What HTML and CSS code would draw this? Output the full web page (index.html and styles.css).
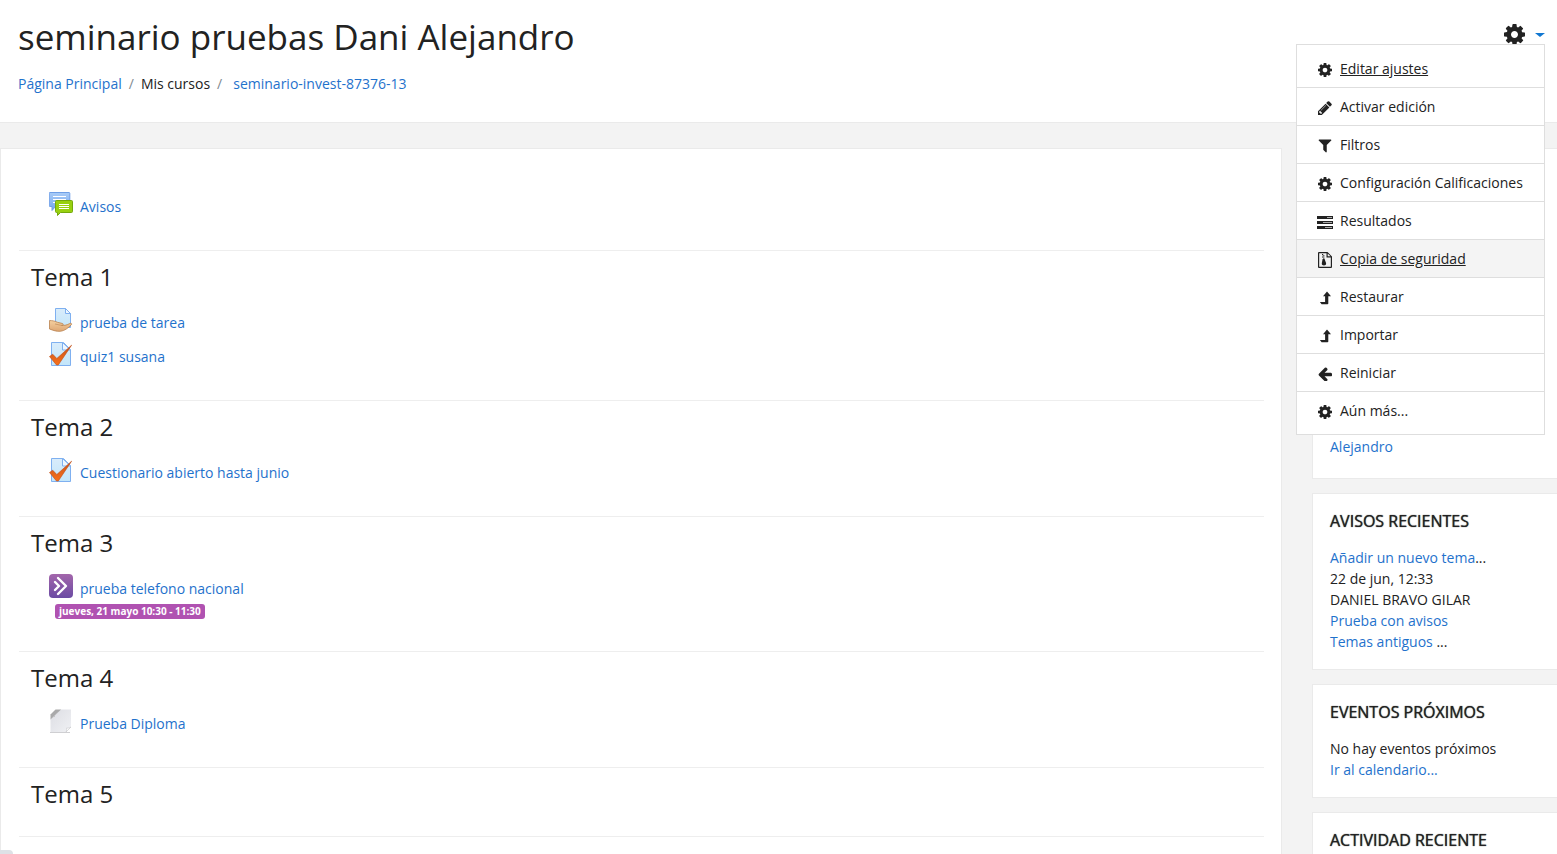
FILE: index.html
```
<!DOCTYPE html>
<html lang="es">
<head>
    <meta charset="UTF-8">
    <meta name="viewport" content="width=device-width, initial-scale=1.0">
    <title>seminario pruebas Dani Alejandro</title>
    <link rel="stylesheet" href="styles.css">
</head>
<body>
    <svg class="sprite" aria-hidden="true">
        <defs>
            <linearGradient id="paper" x1="0" y1="0" x2="0" y2="1">
                <stop offset="0" stop-color="#d9ecfb"/>
                <stop offset="1" stop-color="#c3e6fa"/>
            </linearGradient>
            <linearGradient id="blue" x1="0" y1="0" x2="0" y2="1">
                <stop offset="0" stop-color="#a9ccf7"/>
                <stop offset="1" stop-color="#72a5ee"/>
            </linearGradient>
            <linearGradient id="purple" x1="0" y1="0" x2="0" y2="1">
                <stop offset="0" stop-color="#a366ab"/>
                <stop offset="1" stop-color="#6b4ba3"/>
            </linearGradient>
            <linearGradient id="orange" x1="0" y1="0" x2="0" y2="1">
                <stop offset="0" stop-color="#c8531c"/>
                <stop offset="1" stop-color="#f7701a"/>
            </linearGradient>
            <linearGradient id="skin" x1="0" y1="0" x2="0" y2="1">
                <stop offset="0" stop-color="#f5d0a0"/>
                <stop offset="1" stop-color="#dda673"/>
            </linearGradient>
            <linearGradient id="grey" x1="0" y1="0" x2="1" y2="1">
                <stop offset="0" stop-color="#dcdde3"/>
                <stop offset="1" stop-color="#f0f1f4"/>
            </linearGradient>
        </defs>
        <symbol id="i-cog" viewBox="0 128 1536 1536">
            <path d="M1024 896q0-106-75-181t-181-75-181 75-75 181 75 181 181 75 181-75 75-181zm512-109v222q0 12-8 23t-20 13l-185 28q-19 54-39 91 35 50 107 138 10 12 10 25t-9 23q-27 37-99 108t-94 71q-12 0-26-9l-138-108q-44 23-91 38-16 136-29 186-7 28-36 28h-222q-14 0-24.500-8.500t-11.500-21.500l-28-184q-49-16-90-37l-141 107q-10 9-25 9-14 0-25-11-126-114-165-168-7-10-7-23 0-12 8-23 15-21 51-66.500t54-70.500q-27-50-41-99l-183-27q-13-2-21-12.500t-8-23.500v-222q0-12 8-23t19-13l186-28q14-46 39-92-40-57-107-138-10-12-10-24 0-10 9-23 26-36 98.500-107.500t94.500-71.500q13 0 26 10l138 107q44-23 91-38 16-136 29-186 7-28 36-28h222q14 0 24.500 8.500t11.500 21.500l28 184q49 16 90 37l142-107q9-9 24-9 13 0 25 10 129 119 165 170 7 8 7 22 0 12-8 23-15 21-51 66.500t-54 70.500q26 50 41 98l183 28q13 2 21 12.500t8 23.500z"/>
        </symbol>
        <symbol id="i-pencil" viewBox="128 128 1536 1536">
            <path d="M491 1536l91-91-235-235-91 91v107h128v128h107zm523-928q0-22-22-22-10 0-17 7l-542 542q-7 7-7 17 0 22 22 22 10 0 17-7l542-542q7-7 7-17zm-54-192l416 416-832 832h-416v-416zm683 96q0 53-37 90l-166 166-416-416 166-165q36-38 90-38 53 0 91 38l235 234q37 39 37 91z"/>
        </symbol>
        <symbol id="i-filter" viewBox="128 192 1536 1536">
            <path d="M1595 295q17 41-14 70l-493 493v742q0 42-39 59-13 5-25 5-27 0-45-19l-256-256q-19-19-19-45v-486l-493-493q-31-29-14-70 17-39 59-39h1280q42 0 59 39z"/>
        </symbol>
        <symbol id="i-tasks" viewBox="0 0 16 14">
            <path d="M0 1h16v3H0zM0 6h16v3H0zM0 11h16v3H0z"/>
            <path d="M10 2h5v1h-5zM6 7h9v1H6zM8 12h7v1H8z" fill="#aaa"/>
        </symbol>
        <symbol id="i-archive" viewBox="0 0 14 16">
            <path fill-rule="evenodd" d="M1 0h8.500L14 4.500V15a1 1 0 0 1-1 1H1a1 1 0 0 1-1-1V1a1 1 0 0 1 1-1zM1.200 1.200v13.600h11.600V5.500H8.500V1.200zM9.700 1.500v2.800h2.800z"/>
            <path d="M4 2h1.200v1.200H4zM5.200 3.200h1.200v1.200H5.200zM4 4.400h1.200v1.200H4zM5.200 5.600h1.200v1.200H5.200zM4.600 7h2l1.500 4.200c.5 3-4.800 3-4.300 0z"/>
        </symbol>
        <symbol id="i-up" viewBox="0 0 14 14">
            <path d="M8 0.500l4 4.700H9.300V12.500q0 .8-.8.800H2.600L.900 11h5.200V5.200H4z" transform="translate(1 0)"/>
        </symbol>
        <symbol id="i-left" viewBox="128 128 1536 1536">
            <path d="M1664 896v128q0 53-32.500 90.500t-84.500 37.500h-704l293 294q38 36 38 90t-38 90l-75 76q-37 37-90 37-52 0-91-37l-651-652q-37-37-37-90 0-52 37-91l651-650q38-38 91-38 52 0 90 38l75 74q38 38 38 91t-38 91l-293 293h704q52 0 84.500 37.500t32.500 90.500z"/>
        </symbol>
        <symbol id="i-forum" viewBox="0 0 24 24">
            <path d="M1 .5h19a.8.8 0 0 1 .8.800v12.400a.8.8 0 0 1-.8.800H6.500L3 18.500v-4H1a.8.8 0 0 1-.8-.8V1.300A.8.8 0 0 1 1 .5z" fill="url(#blue)" stroke="#6f9fe6"/>
            <path d="M4 4.500h13M4 7.500h13M4 10.500h3" stroke="#fff"/>
            <path d="M7.500 8.500h15a1 1 0 0 1 1 1v10a1 1 0 0 1-1 1h-11l-3 3v-3h-1a1 1 0 0 1-1-1v-10a1 1 0 0 1 1-1z" fill="#98d010" stroke="#74a90c"/>
            <path d="M10 12.500h10M10 14.500h10M10 16.500h10" stroke="#fff"/>
        </symbol>
        <symbol id="i-assign" viewBox="0 0 24 24">
            <path d="M6.500.5h10l5 5v14h-15z" fill="url(#paper)" stroke="#7fb0f0"/>
            <path d="M16.500.5v5h5z" fill="#eef7ff" stroke="#7fb0f0"/>
            <path d="M.5 12.500c3 .2 5 .3 8 1.800l5 1.200c1.500.6.500 2-1 1.900 3 .3 6-.5 8-1.800 1.500-.8 3 .1 1.600 1.400-3 3-6.500 5.800-10.600 6.300-4 .3-7-.8-11-2.300z" fill="url(#skin)" stroke="#b9814f" stroke-width=".8"/>
            <path d="M6 16l6.500 1.400" stroke="#b9814f" stroke-width=".6" fill="none"/>
        </symbol>
        <symbol id="i-quiz" viewBox="0 0 24 24">
            <path d="M2.500.5h12l7 7v16h-19z" fill="url(#paper)" stroke="#7fb0f0"/>
            <path d="M13.500.5v7.500h8z" fill="#eef7ff" stroke="#7fb0f0"/>
            <path d="M.5 14.500l3.200-2.300 4.100 4.300L22.600 3.200 9.300 23H7.500z" fill="url(#orange)" stroke="#bd4a12" stroke-width=".6"/>
        </symbol>
        <symbol id="i-collab" viewBox="0 0 24 24">
            <rect width="24" height="24" rx="4" fill="url(#purple)"/>
            <path d="M9 4l8 8-8 8M6 8l4 4-4 4" fill="none" stroke="#fff" stroke-width="2.400" stroke-linecap="round" stroke-linejoin="round"/>
        </symbol>
        <symbol id="i-diploma" viewBox="0 0 24 24">
            <path d="M1 23.500h20" stroke="#cfcfd2"/>
            <path d="M11 .5H22v17.500L17 23H1.500V10z" fill="url(#grey)"/>
            <path d="M1.500 5.500L6.500.5H12L1.500 10.500z" fill="#a9a9aa"/>
            <path d="M1.500 10.500C4 8 5 8 6 8.200c0-2 0-3 1-3.500C8 4 10 3 12 .5z" fill="#c4c4c6"/>
            <path d="M22 18l-5 5c.8-1.500.8-3 .5-4 1.500.2 3 0 4.500-1z" fill="#fff" stroke="#c6c6ca" stroke-width=".6"/>
        </symbol>
    </svg>

    <header class="page-header">
        <div>
            <h1>seminario pruebas Dani Alejandro</h1>
            <nav class="breadcrumb">
                <a href="#">Página Principal</a>
                <span class="sep">/</span>
                <span>Mis cursos</span>
                <span class="sep">/</span>
                <a href="#" class="current">seminario-invest-87376-13</a>
            </nav>
        </div>
        <div class="settings">
            <button class="settings-btn" aria-label="Ajustes" aria-expanded="true">
                <svg class="gear"><use href="#i-cog"/></svg>
                <span class="caret"></span>
            </button>
            <div class="menu">
                <a href="#" class="focused"><svg><use href="#i-cog"/></svg>Editar ajustes</a>
                <a href="#"><svg><use href="#i-pencil"/></svg>Activar edición</a>
                <a href="#"><svg><use href="#i-filter"/></svg>Filtros</a>
                <a href="#"><svg><use href="#i-cog"/></svg>Configuración Calificaciones</a>
                <a href="#"><svg class="wide"><use href="#i-tasks"/></svg>Resultados</a>
                <a href="#" class="hovered"><svg class="tall"><use href="#i-archive"/></svg>Copia de seguridad</a>
                <a href="#"><svg><use href="#i-up"/></svg>Restaurar</a>
                <a href="#"><svg><use href="#i-up"/></svg>Importar</a>
                <a href="#"><svg><use href="#i-left"/></svg>Reiniciar</a>
                <a href="#"><svg><use href="#i-cog"/></svg>Aún más...</a>
            </div>
        </div>
    </header>

    <div class="page">
        <main class="course">
            <section>
                <ul>
                    <li><a href="#"><svg><use href="#i-forum"/></svg>Avisos</a></li>
                </ul>
            </section>
            <section>
                <h2>Tema 1</h2>
                <ul>
                    <li><a href="#"><svg><use href="#i-assign"/></svg>prueba de tarea</a></li>
                    <li><a href="#"><svg><use href="#i-quiz"/></svg>quiz1 susana</a></li>
                </ul>
            </section>
            <section>
                <h2>Tema 2</h2>
                <ul>
                    <li><a href="#"><svg><use href="#i-quiz"/></svg>Cuestionario abierto hasta junio</a></li>
                </ul>
            </section>
            <section>
                <h2>Tema 3</h2>
                <ul>
                    <li>
                        <a href="#"><svg><use href="#i-collab"/></svg>prueba telefono nacional</a>
                        <span class="badge">jueves, 21 mayo 10:30 - 11:30</span>
                    </li>
                </ul>
            </section>
            <section>
                <h2>Tema 4</h2>
                <ul>
                    <li><a href="#"><svg><use href="#i-diploma"/></svg>Prueba Diploma</a></li>
                </ul>
            </section>
            <section>
                <h2>Tema 5</h2>
            </section>
            <section></section>
        </main>

        <aside class="blocks">
            <div class="block block-nav">
                <a href="#">Alejandro</a>
            </div>
            <div class="block">
                <h3>AVISOS RECIENTES</h3>
                <p><a href="#">Añadir un nuevo tema</a>...</p>
                <p>22 de jun, 12:33</p>
                <p>DANIEL BRAVO GILAR</p>
                <p><a href="#">Prueba con avisos</a></p>
                <p><a href="#">Temas antiguos</a> ...</p>
            </div>
            <div class="block">
                <h3>EVENTOS PRÓXIMOS</h3>
                <p>No hay eventos próximos</p>
                <p><a href="#">Ir al calendario...</a></p>
            </div>
            <div class="block">
                <h3>ACTIVIDAD RECIENTE</h3>
            </div>
        </aside>
    </div>
    <div class="status"></div>
</body>
</html>
```
FILE: styles.css
```
* {
    box-sizing: border-box;
}
body {
    font-family: "Open Sans", sans-serif;
    font-size: 14px;
    line-height: 21px;
    color: #222;
    background-color: #f3f3f3;
    height: 100vh;
    margin: 0;
    overflow: hidden;
}
h1, h2, h3, p, ul {
    margin: 0;
    padding: 0;
    font-weight: 400;
}
a {
    color: #1f72cc;
    text-decoration: none;
}
.sprite {
    position: absolute;
    width: 0;
    height: 0;
}
.page-header {
    display: flex;
    justify-content: space-between;
    padding: 16px 12px 28px 18px;
    background-color: #fff;
    border-bottom: 1px solid #eaeaea;
}
h1 {
    font-size: 35px;
    line-height: 42px;
    margin-bottom: 15px;
}
.breadcrumb {
    display: flex;
    gap: 7px;
}
.breadcrumb .sep {
    color: #818a91;
}
.breadcrumb .current {
    margin-left: 4px;
}

/* settings menu */
.settings {
    position: relative;
}
.settings-btn {
    display: flex;
    align-items: center;
    gap: 10px;
    margin-top: 8px;
    padding: 0;
    border: none;
    background: none;
    cursor: pointer;
}
.gear {
    width: 21px;
    height: 21px;
    fill: #222;
}
.caret {
    border: 5px solid transparent;
    border-top: 4px solid #1177d1;
    border-bottom: none;
}
.menu {
    position: absolute;
    top: 28px;
    right: 0;
    width: 249px;
    padding: 5px 0;
    background-color: #fff;
    border: 1px solid #dedede;
    z-index: 10;
}
.menu a {
    display: flex;
    align-items: center;
    gap: 8px;
    padding: 8px 20px 8px 21px;
    color: #222;
    white-space: nowrap;
    border-bottom: 1px solid #dedede;
}
.menu a:last-child {
    border-bottom: none;
}
.menu svg {
    flex: none;
    width: 14px;
    height: 14px;
    margin-top: 3px;
    fill: #222;
}
.menu .wide {
    width: 16px;
    margin-left: -1px;
    margin-right: -1px;
}
.menu .tall {
    height: 16px;
}
.menu .focused, .menu .hovered, .menu a:hover {
    text-decoration: underline;
}
.menu .hovered, .menu a:hover {
    background-color: #f4f4f4;
}

/* course content */
.page {
    display: flex;
    gap: 30px;
    padding-top: 25px;
}
.course {
    flex: 1;
    padding: 28px 17px 0 18px;
    background-color: #fff;
    border: 1px solid #eaeaea;
}
.course section {
    padding: 10px 0 16px 12px;
    border-bottom: 1px solid #eee;
}
.course h2 {
    font-size: 24px;
    line-height: 32px;
    margin-bottom: 10px;
}
.course ul {
    list-style: none;
    padding: 0 0 13px 18px;
}
.course li a {
    display: flex;
    align-items: flex-end;
    gap: 7px;
    padding: 5px 0 4px;
}
.course li svg {
    width: 24px;
    height: 24px;
    margin-bottom: 1px;
}
.badge {
    display: block;
    width: fit-content;
    margin: 1px 0 3px 6px;
    padding: 0 4px;
    font-size: 10px;
    font-weight: 700;
    line-height: 15px;
    color: #fff;
    background-color: #b052b1;
    border-radius: 3px;
}

/* side blocks */
.blocks {
    display: flex;
    flex-direction: column;
    gap: 14px;
    width: 245px;
}
.block {
    padding: 16px 17px 17px;
    background-color: #fff;
    border: 1px solid #eaeaea;
    border-right: none;
}
.block-nav {
    display: flex;
    align-items: flex-end;
    min-height: 331px;
    padding-bottom: 21px;
}
.block h3 {
    font-size: 16px;
    line-height: 22px;
    margin-bottom: 15px;
    text-shadow: 0 0 1px #222;
}
.status {
    position: fixed;
    left: 0;
    bottom: 0;
    width: 13px;
    height: 4px;
    background-color: #dee1e6;
    border-top-right-radius: 4px;
}
```
